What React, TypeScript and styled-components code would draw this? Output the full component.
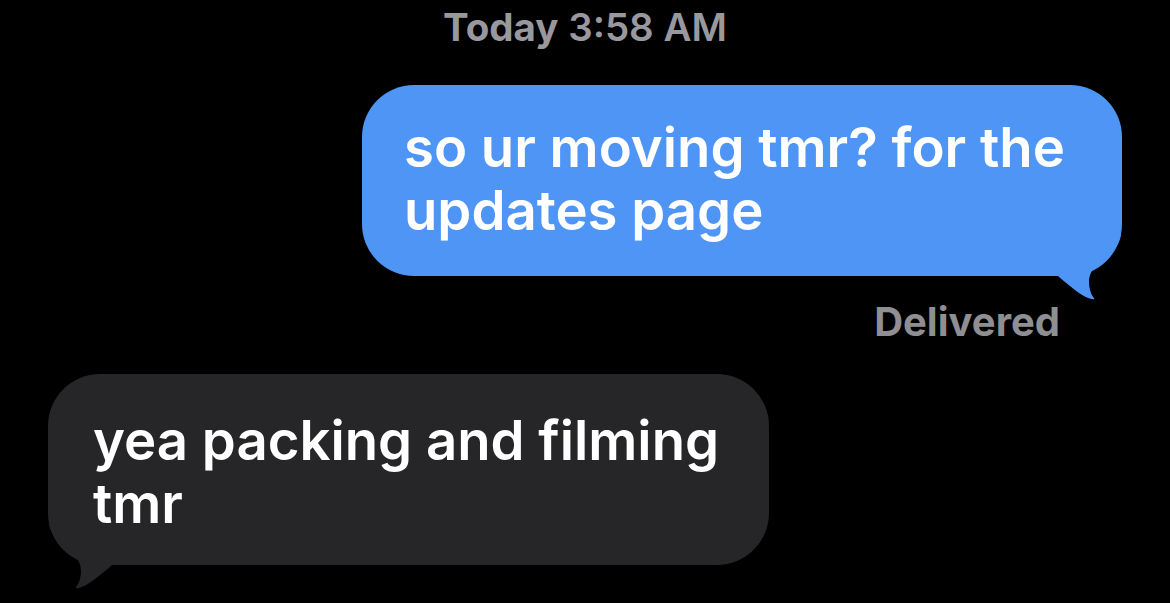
import React from 'react';
import styled, { createGlobalStyle } from 'styled-components';

const GlobalStyle = createGlobalStyle`
  html, body {
    margin: 0;
    padding: 0;
    background: #000;
  }

  body {
    font-family: Inter, 'Noto Sans', 'Liberation Sans', sans-serif;
    -webkit-font-smoothing: antialiased;
  }
`;

const Thread = styled.div`
  display: flex;
  flex-direction: column;
  width: 1170px;
  height: 603px;
  padding-top: 5px;
  box-sizing: border-box;
  overflow: hidden;
  background: #000;
`;

const Timestamp = styled.div`
  align-self: center;
  font-size: 38.5px;
  line-height: 44px;
  font-weight: 600;
  color: #98989e;

  strong {
    font-weight: 700;
  }
`;

const Bubble = styled.div<{ $sent: boolean }>`
  position: relative;
  box-sizing: border-box;
  width: ${(p) => (p.$sent ? '760px' : '721px')};
  margin-top: ${(p) => (p.$sent ? '36px' : '30px')};
  ${(p) =>
    p.$sent
      ? 'align-self: flex-end; margin-right: 48px;'
      : 'align-self: flex-start; margin-left: 48px;'}
  padding: ${(p) => (p.$sent ? '31px 38px 34px 42px' : '35px 38px 30px 45px')};
  border-radius: 52px;
  background: ${(p) => (p.$sent ? '#4f95f6' : '#262629')};
  color: #fff;
  font-size: 54.5px;
  line-height: 63px;
  font-weight: 600;
`;

const Tail = styled.svg<{ $sent: boolean }>`
  position: absolute;
  bottom: -25px;
  width: 80px;
  height: 75px;
  ${(p) => (p.$sent ? 'right: 0;' : 'left: 0; transform: scaleX(-1);')}
`;

const Status = styled.div`
  align-self: flex-end;
  margin-top: 24px;
  margin-right: 110px;
  font-size: 40px;
  line-height: 44px;
  font-weight: 700;
  color: #8e8e93;
`;

interface MessageProps {
  sent?: boolean;
  text: string;
}

const Message: React.FC<MessageProps> = ({ sent = false, text }) => {
  const color = sent ? '#4f95f6' : '#262629';
  return (
    <Bubble $sent={sent}>
      {text}
      <Tail $sent={sent} viewBox="0 0 80 75">
        <path
          fill={color}
          d="M79 8 C77 30 47 34 47 56 C47 64 50 70 52 72 Q53 74 50 73 C42 72 30 62 16 50 L20 20 Z"
        />
      </Tail>
    </Bubble>
  );
};

export default function App() {
  return (
    <Thread>
      <GlobalStyle />
      <Timestamp>
        <strong>Today</strong> 3:58 AM
      </Timestamp>
      <Message sent text="so ur moving tmr? for the updates page" />
      <Status>Delivered</Status>
      <Message text="yea packing and filming tmr" />
    </Thread>
  );
}
